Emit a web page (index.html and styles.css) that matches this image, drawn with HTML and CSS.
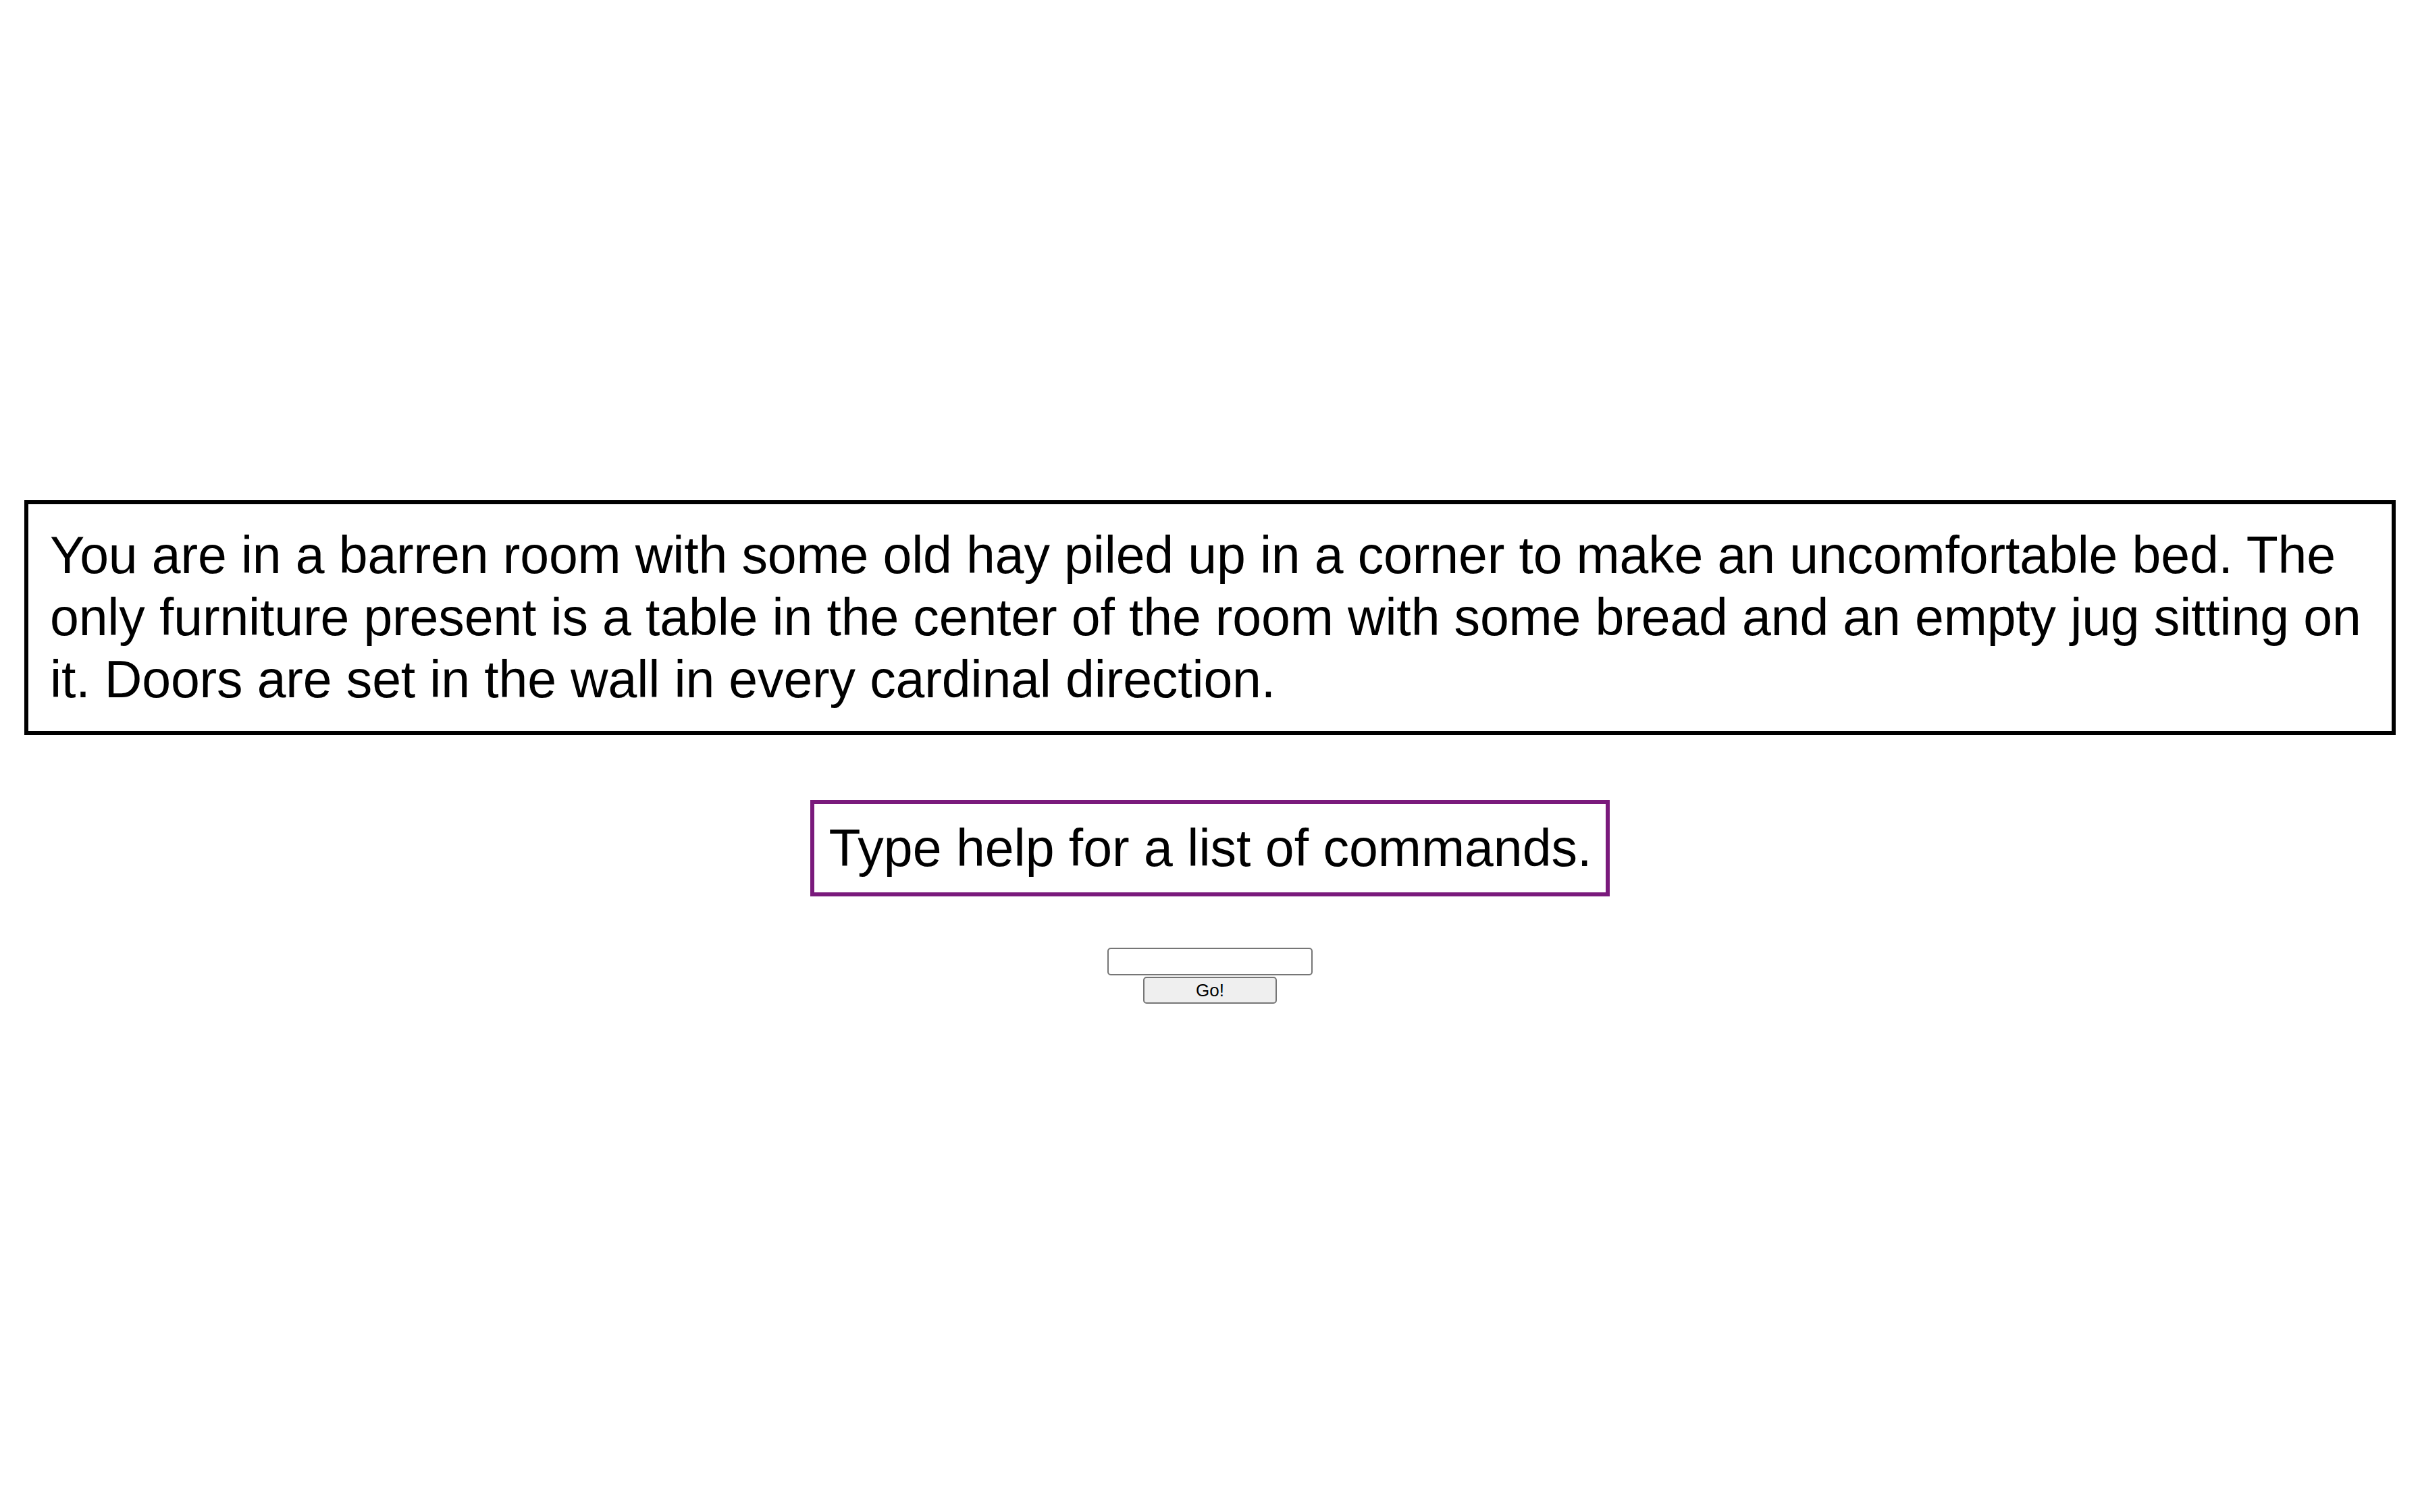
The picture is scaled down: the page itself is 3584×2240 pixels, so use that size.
FILE: index.html
```html
<!DOCTYPE html>
<html>
<head>
<meta charset="utf-8">
<title>Adventure</title>
<link rel="stylesheet" href="styles.css">
</head>
<body>
<main class="game">
  <div class="description">You are in a barren room with some old hay piled up in a corner to make an uncomfortable bed. The only furniture present is a table in the center of the room with some bread and an empty jug sitting on it. Doors are set in the wall in every cardinal direction.</div>
  <div class="message">Type help for a list of commands.</div>
  <form class="command">
    <input class="command-input" type="text">
    <button class="command-button" type="button">Go!</button>
  </form>
</main>
</body>
</html>
```

FILE: styles.css
```css
html, body {
  margin: 0;
  padding: 0;
  background: #ffffff;
}

body {
  font-family: "Liberation Sans", Arial, Helvetica, sans-serif;
  color: #000000;
}

.game {
  display: flex;
  flex-direction: column;
  align-items: center;
  padding: 741px 36px 0 36px;
}

.description {
  align-self: stretch;
  border: 6px solid #000000;
  padding: 29px 24px 31px 32px;
  font-size: 77px;
  line-height: 92px;
  letter-spacing: -0.14px;
}

.message {
  margin-top: 96px;
  border: 6px solid #7a1a7c;
  padding: 19px 21px 20px 22px;
  font-size: 77px;
  line-height: 92px;
}

.command {
  margin-top: 76px;
  display: flex;
  flex-direction: column;
  align-items: center;
  gap: 2px;
}

.command-input {
  box-sizing: border-box;
  width: 304px;
  height: 41px;
  border: 2px solid #767676;
  border-radius: 5px;
  background: #ffffff;
  margin: 0;
  padding: 0 4px;
}

.command-button {
  box-sizing: border-box;
  width: 198px;
  height: 40px;
  border: 2px solid #767676;
  border-radius: 5px;
  background: #efefef;
  margin: 0;
  padding: 0;
  font-family: "Liberation Sans", Arial, Helvetica, sans-serif;
  font-size: 26px;
  color: #000000;
}
```
